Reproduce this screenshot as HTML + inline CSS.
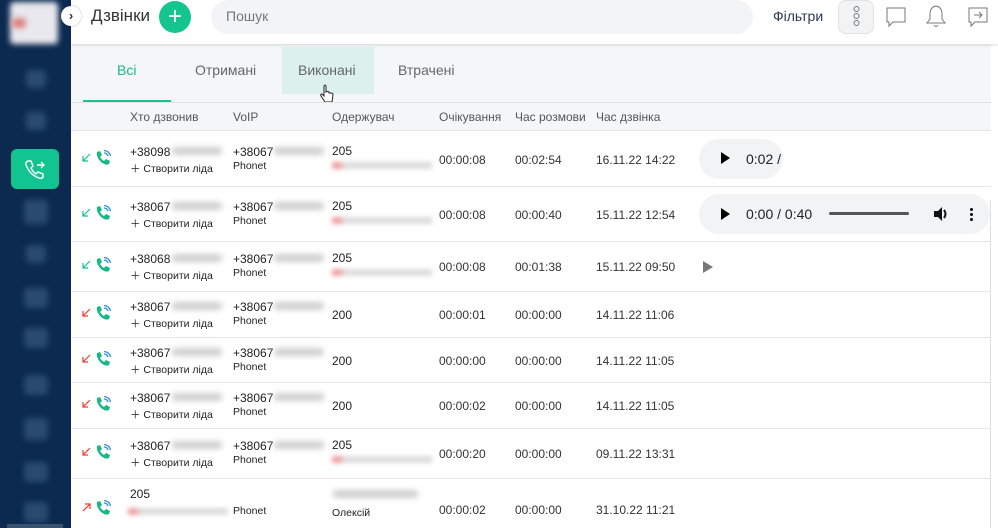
<!DOCTYPE html>
<html><head><meta charset="utf-8"><style>
*{margin:0;padding:0;box-sizing:border-box}
body{width:998px;height:528px;overflow:hidden;background:#fff;font-family:"Liberation Sans",Roboto,sans-serif;position:relative;color:#222}
.a{position:absolute;white-space:nowrap}
#side{left:0;top:0;width:71px;height:528px;background:#0c2a50}
.blob{position:absolute;background:#2a4a70;filter:blur(3px);border-radius:4px}
#top{left:71px;top:0;width:927px;height:44px;background:#fff;box-shadow:0 1px 3px rgba(0,0,0,.15);z-index:2}
#tabs{left:71px;top:44px;width:920px;height:87px;background:#f4f6f8;border-bottom:1px solid #e3e6e9}
.hl{position:absolute;left:71px;width:920px;height:1px;background:#e4e6e8}
.blur{position:absolute;background:#d0d0d0;filter:blur(3px);border-radius:3px;height:8px}
.red{position:absolute;background:linear-gradient(90deg,#f0a0a0 0,#f0a0a0 8%,#dcdcdc 12%);filter:blur(2.5px);height:7px;width:100px}
.t12{font-size:12px}
.t11{font-size:10.5px}
.g{color:#333}
</style></head><body>
<div class="a" id="side">
 <div class="blob" style="left:10px;top:2px;width:48px;height:42px;background:#e8e8ee"></div>
 <div class="blob" style="left:12px;top:18px;width:14px;height:10px;background:#e08080"></div>
 <div class="blob" style="left:26px;top:70px;width:20px;height:18px"></div>
 <div class="blob" style="left:26px;top:112px;width:20px;height:18px"></div>
 <div style="position:absolute;left:11px;top:149px;width:48px;height:40px;background:#12c490;border-radius:6px"></div>
 <svg style="position:absolute;left:22px;top:156px" width="26" height="26" viewBox="0 0 26 26" fill="none" stroke="#fff" stroke-width="1.4"><path d="M6 5 L9 5 L11 10 L9 12 Q11 16 14 18 L16 16 L21 18 L21 21 Q20 23 17 22 Q8 19 4 9 Q3 6 6 5Z"/><path d="M15 9 H22 M19 6 L22 9 L19 12"/></svg>
 <div class="blob" style="left:24px;top:200px;width:24px;height:24px"></div>
 <div class="blob" style="left:26px;top:245px;width:20px;height:18px"></div>
 <div class="blob" style="left:24px;top:288px;width:24px;height:20px"></div>
 <div class="blob" style="left:24px;top:328px;width:24px;height:20px"></div>
 <div class="blob" style="left:24px;top:375px;width:24px;height:20px"></div>
 <div class="blob" style="left:24px;top:418px;width:24px;height:22px"></div>
 <div class="blob" style="left:24px;top:462px;width:24px;height:20px"></div>
 <div class="blob" style="left:24px;top:502px;width:24px;height:20px"></div>
 <div style="position:absolute;left:7px;top:524px;width:56px;height:4px;background:#3a5270"></div>
</div>
<div class="a" id="top">
 <div class="a" style="left:-10px;top:6px;width:20px;height:20px;border-radius:50%;background:#fff;box-shadow:0 0 2px rgba(0,0,0,.3);font-size:13px;text-align:center;line-height:19px;color:#333;font-weight:bold">›</div>
 <div class="a" style="left:20px;top:6px;font-size:17px;color:#333">Дзвінки</div>
 <div class="a" style="left:88px;top:1px;width:32px;height:32px;border-radius:50%;background:#15c590;color:#fff;font-size:24px;text-align:center;line-height:31px">+</div>
 <div class="a" style="left:140px;top:0;width:542px;height:34px;border-radius:17px;background:#f3f4f6;padding-left:15px;line-height:33px;font-size:14px;color:#777">Пошук</div>
 <div class="a" style="left:702px;top:8px;font-size:14px;color:#2b3a55">Фільтри</div>
 <div class="a" style="left:767px;top:0;width:36px;height:34px;border-radius:8px;background:#f1f3f5;border:1px solid #e0e3e6">
  <svg width="36" height="34"><g fill="none" stroke="#777" stroke-width="1"><circle cx="17.5" cy="8" r="2.5"/><circle cx="17.5" cy="15" r="2.5"/><circle cx="17.5" cy="22" r="2.5"/></g></svg></div>
 <svg class="a" style="left:814px;top:5px" width="24" height="24" fill="none" stroke="#777" stroke-width="1"><path d="M2 3 H20 V17 H8 L4 21 V17 H2Z"/></svg>
 <svg class="a" style="left:853px;top:3px" width="24" height="26" fill="none" stroke="#777" stroke-width="1"><path d="M12 3 Q6 4 6 11 V16 L3 20 H21 L18 16 V11 Q18 4 12 3Z M10 22 Q12 25 14 22"/></svg>
 <svg class="a" style="left:896px;top:5px" width="24" height="24" fill="none" stroke="#777" stroke-width="1"><path d="M2 3 H20 V17 H8 L4 21 V17 H2Z M7 10 H15 M12 7 L15 10 L12 13"/></svg>
</div>
<div class="a" id="tabs">
 <div class="a" style="left:211px;top:3px;width:92px;height:47px;background:#dcf0ec"></div>
 <div class="a" style="left:46px;top:18px;font-size:14px;color:#15b886">Всі</div>
 <div class="a" style="left:12px;top:56px;width:88px;height:2px;background:#15c590"></div>
 <div class="a" style="left:124px;top:18px;font-size:14px;color:#666">Отримані</div>
 <div class="a" style="left:227px;top:18px;font-size:14px;color:#666">Виконані</div>
 <div class="a" style="left:327px;top:18px;font-size:14px;color:#666">Втрачені</div>
 <svg class="a" style="left:248px;top:40px" width="16" height="22"><path d="M5 2 V12 L3 10 Q1 10 2 12 L6 18 H13 L14 11 Q14 9 12 9 L10 9 V8 Q8 7 7 8 V2 Q6 0 5 2Z" fill="#fff" stroke="#222" stroke-width="1"/></svg>
 <div class="a" style="left:0;top:58px;width:920px;height:1px;background:#dfe2e5"></div>
 <div class="a t12" style="left:59px;top:66px;color:#555">Хто дзвонив</div>
 <div class="a t12" style="left:162px;top:66px;color:#555">VoIP</div>
 <div class="a t12" style="left:261px;top:66px;color:#555">Одержувач</div>
 <div class="a t12" style="left:368px;top:66px;color:#555">Очікування</div>
 <div class="a t12" style="left:444px;top:66px;color:#555">Час розмови</div>
 <div class="a t12" style="left:525px;top:66px;color:#555">Час дзвінка</div>
</div>
<div class="a" style="left:990px;top:200px;width:1px;height:328px;background:#e0e0e0"></div>
<div id="rows"></div>
<script>
var rows=[
[131,186,'+38098','+38067','205',1,'00:00:08','00:02:54','16.11.22 14:22','g'],
[186,241,'+38067','+38067','205',1,'00:00:08','00:00:40','15.11.22 12:54','g'],
[241,291,'+38068','+38067','205',1,'00:00:08','00:01:38','15.11.22 09:50','g'],
[291,337,'+38067','+38067','200',0,'00:00:01','00:00:00','14.11.22 11:06','r'],
[337,382,'+38067','+38067','200',0,'00:00:00','00:00:00','14.11.22 11:05','r'],
[382,428,'+38067','+38067','200',0,'00:00:02','00:00:00','14.11.22 11:05','r'],
[428,478,'+38067','+38067','205',1,'00:00:20','00:00:00','09.11.22 13:31','r'],
[478,540,'205','','',2,'00:00:02','00:00:00','31.10.22 11:21','o']];
var h='';
rows.forEach(function(r){
 var t=r[0],b=r[1],m=Math.round((t+b)/2);
 if(b<528)h+='<div class="hl" style="top:'+b+'px"></div>';
 var col=r[9]=='g'?'#18c08a':'#f03a2a';
 var ap=r[9]=='o'?'M9 2 L2 9 M4 2 H9 V7':'M9 2 L2 9 M2 4 V9 H7';
 h+='<svg class="a" style="left:81px;top:'+(m-7)+'px" width="12" height="12" fill="none" stroke="'+col+'" stroke-width="1.2"><path d="'+ap+'"/></svg>';
 h+='<svg class="a" style="left:94px;top:'+(m-10)+'px" width="18" height="18"><path d="M3 3 L6 2 L8 6 L6 8 Q8 11 10 12 L12 10 L16 12 L15 15 Q12 17 7 13 Q2 8 3 3Z" fill="#15b985"/><path d="M10 4 Q13 4 14 7 M10 1.5 Q15.5 2 16.5 7" fill="none" stroke="#2a8fd8" stroke-width="1.3"/></svg>';
 if(r[5]!=2){
  h+='<div class="a t12" style="left:130px;top:'+(m-14)+'px">'+r[2]+'</div><div class="blur" style="left:172px;top:'+(m-12)+'px;width:50px"></div>';
  h+='<div class="a t11" style="left:130px;top:'+(m+2)+'px">＋ Створити ліда</div>';
  h+='<div class="a t12" style="left:233px;top:'+(m-14)+'px">'+r[3]+'</div><div class="blur" style="left:274px;top:'+(m-12)+'px;width:50px"></div>';
  h+='<div class="a t11" style="left:233px;top:'+(m+1)+'px">Phonet</div>';
  if(r[5]==1){h+='<div class="a t12" style="left:332px;top:'+(m-15)+'px">'+r[4]+'</div><div class="red" style="left:332px;top:'+(m+3)+'px"></div>';}
  else h+='<div class="a t12" style="left:332px;top:'+(m-6)+'px">'+r[4]+'</div>';
 } else {
  h+='<div class="a t12" style="left:130px;top:'+(t+9)+'px">205</div><div class="red" style="left:128px;top:'+(t+30)+'px"></div>';
  h+='<div class="a t11" style="left:233px;top:'+(t+27)+'px">Phonet</div>';
  h+='<div class="blur" style="left:333px;top:'+(t+12)+'px;width:85px"></div><div class="a t11" style="left:332px;top:'+(t+29)+'px">Олексій</div>';
 }
 h+='<div class="a t12 g" style="left:439px;top:'+(m-6)+'px">'+r[6]+'</div>';
 h+='<div class="a t12 g" style="left:515px;top:'+(m-6)+'px">'+r[7]+'</div>';
 h+='<div class="a t12 g" style="left:596px;top:'+(m-6)+'px">'+r[8]+'</div>';
});
document.getElementById('rows').innerHTML=h;
</script>
<div class="a" style="left:699px;top:139px;width:84px;height:40px;border-radius:20px;background:#f1f3f4"></div>
<div class="a" style="left:721px;top:152px;width:0;height:0;border-left:9px solid #000;border-top:6px solid transparent;border-bottom:6px solid transparent"></div>
<div class="a" style="left:746px;top:151px;font-size:14px;color:#222">0:02 /</div>
<div class="a" style="left:699px;top:194px;width:291px;height:40px;border-radius:20px;background:#f1f3f4"></div>
<div class="a" style="left:721px;top:208px;width:0;height:0;border-left:9px solid #000;border-top:6px solid transparent;border-bottom:6px solid transparent"></div>
<div class="a" style="left:746px;top:206px;font-size:14px;color:#222">0:00 / 0:40</div>
<div class="a" style="left:829px;top:212px;width:80px;height:3px;border-radius:2px;background:#555"></div>
<svg class="a" style="left:932px;top:205px" width="18" height="18"><path d="M2 6 H6 L10 2 V16 L6 12 H2Z" fill="#111"/><path d="M12 5 Q15 9 12 13" stroke="#111" stroke-width="2" fill="none"/></svg>
<div class="a" style="left:970px;top:207px;width:3px;height:14px;background:radial-gradient(circle,#111 1.4px,transparent 1.6px) 0 0/3px 5px"></div>
<div class="a" style="left:703px;top:261px;width:0;height:0;border-left:10px solid #777;border-top:6px solid transparent;border-bottom:6px solid transparent"></div>
</body></html>
